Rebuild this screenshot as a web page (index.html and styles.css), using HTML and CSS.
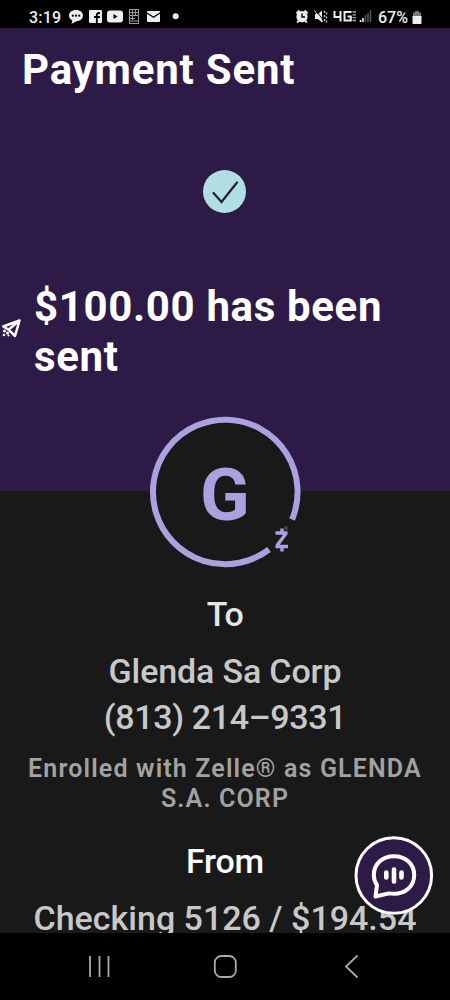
FILE: index.html
```
<!DOCTYPE html>
<html lang="en">
<head>
<meta charset="utf-8" />
<title>Payment Sent</title>
<link rel="stylesheet" href="styles.css">
</head>

<body>
<div id="phone">
	<div class="status">
		<span class="time">3:19</span>
		<svg class="s-left" width="114" height="18" viewBox="0 0 114 18">
			<path d="M8 2c4.200 0 7 2.300 7 5.600s-2.800 5.700-6.500 5.700L3.500 16l.8-3.500C2 11.400 1 9.700 1 7.600 1 4.300 3.800 2 8 2z" fill="#eee"/>
			<g fill="#000"><circle cx="4.800" cy="7.700" r="1.100"/><circle cx="8" cy="7.700" r="1.100"/><circle cx="11.200" cy="7.700" r="1.100"/></g>
			<rect x="21" y="2" width="13" height="13" rx="1" fill="#eee"/>
			<path d="M28.800 15V6.800q0-2 3.200-1.800M26 9h6" fill="none" stroke="#000" stroke-width="1.800"/>
			<rect x="39" y="2.500" width="16" height="12" rx="3" fill="#eee"/>
			<path d="M45.500 6v5l4-2.500z" fill="#000"/>
			<rect x="61.500" y="1.500" width="9" height="14" fill="none" stroke="#999"/>
			<path d="M62 4.500h8M62 7.500h8M62 10.500h5M64.500 2v10M67.500 2v6M62 13h8" stroke="#999"/>
			<rect x="79" y="3" width="13" height="11" rx="1" fill="#eee"/>
			<path d="M79 5l6.500 4.200L92 5" fill="none" stroke="#000" stroke-width="1.300"/>
			<circle cx="107.700" cy="8.300" r="3" fill="#eee"/>
		</svg>
		<svg class="s-right" width="78" height="18" viewBox="0 0 78 18">
			<circle cx="7" cy="8.700" r="5.600" fill="#eee"/>
			<path d="M1.500 5.500l3-3M12.500 5.500l-3-3M3.500 13l-1.300 1.700M10.500 13l1.300 1.700" stroke="#eee" stroke-width="2"/>
			<path d="M7 5.500V9h3" fill="none" stroke="#000" stroke-width="1.400"/>
			<path d="M20 6h3l4-3.500v12L23 11h-3z" fill="#eee"/>
			<path d="M20.500 2l7 9" stroke="#000"/>
			<path d="M19.500 2.500l8.500 11.500" stroke="#ddd"/>
			<path d="M29.500 3v2M31.500 4.500v2M29.500 7v2M31.500 8.500v2M29.500 11v2M31.500 12.500v2" stroke="#ccc" stroke-width="1.400"/>
			<path d="M39.500 3v6h6.500M45.500 3v10.500M56.500 4h-7v8.500h6.300V8.500h-3.200" fill="none" stroke="#eee" stroke-width="2"/>
			<path d="M57.500 4h3.500M57.500 6.800H61M57.500 9.600H61M57.500 12.500H61" stroke="#aaa" stroke-width="1.300"/>
			<path d="M65.500 14v-2M68 14v-4" stroke="#eee" stroke-width="1.600"/>
			<path d="M70.500 14V7M73 14V5M75.500 14V2" stroke="#555" stroke-width="1.600"/>
		</svg>
		<span class="percent">67%</span>
		<svg class="battery" width="10" height="14" viewBox="0 0 10 14">
			<path d="M3 0h4v1.500h2v4H1v-4h2z" fill="#777"/>
			<path d="M.5 5h9v7q0 1-1 1h-7q-1 0-1-1z" fill="#eee"/>
		</svg>
	</div>

	<div class="top">
		<h1>Payment Sent</h1>
		<svg class="check" width="43" height="43" viewBox="0 0 43 43">
			<circle cx="21.500" cy="21.500" r="21.500" fill="#b0dfe2"/>
			<path d="M10.500 23l8 9L34 12.500" fill="none" stroke="#201c3a" stroke-width="2.200" stroke-linecap="round"/>
		</svg>
		<div class="sent">
			<svg class="plane" width="22" height="22" viewBox="0 0 22 22">
				<path d="M19.500 2.500L3.300 8.500l5.200 3.200 6.500 6.300zM19.500 2.500l-11 9.200" fill="none" stroke="#fff" stroke-width="2.500" stroke-linejoin="round"/>
				<g fill="#fff"><circle cx="4.500" cy="13" r="1.500"/><circle cx="7.500" cy="15" r="1.500"/><circle cx="4" cy="17" r="1.300"/><circle cx="8.500" cy="17.500" r="1.100"/></g>
			</svg>
			<h2>$100.00 has been sent</h2>
		</div>
	</div>

	<div class="detail">
		<div class="avatar">
			<svg width="152" height="152" viewBox="0 0 152 152">
				<circle cx="76.500" cy="76" r="74.500" fill="#191919"/>
				<path d="M143.100 103.500A72.300 72.300 0 1 0 120 133.500" fill="none" stroke="#aaa1de" stroke-width="6"/>
				<path d="M126.500 117h12M137 117.500l-9 12M126.500 130.500h12.500M133 112.500v4M133 130v5.500" fill="none" stroke="#aaa1de" stroke-width="3.400"/>
				<circle cx="137" cy="112" r="2" fill="#48464f"/>
			</svg>
			<span>G</span>
		</div>
		<h3 class="to">To</h3>
		<p class="name">Glenda Sa Corp</p>
		<p class="tel">(813) 214–9331</p>
		<p class="zelle">Enrolled with Zelle® as GLENDA<br>S.A. CORP</p>
		<h3 class="from">From</h3>
		<p class="account">Checking 5126 / $194.54</p>
	</div>

	<div class="nav">
		<svg width="450" height="67" viewBox="0 0 450 67" fill="none" stroke="#aaa" stroke-width="1.800">
			<path d="M90 23v21M99.500 23v21M108.500 23v21"/>
			<rect x="214.800" y="23" width="21" height="21" rx="6.500"/>
			<path d="M357.500 22.500L346 33.500l11.500 11"/>
		</svg>
	</div>

	<svg class="chat" width="80" height="80" viewBox="0 0 80 80">
		<circle cx="39.800" cy="40.500" r="37.800" fill="#2d1a47" stroke="#fff" stroke-width="3"/>
		<path d="M23 50c-2.200-3-3.200-6.300-3.200-10C19.800 29 28.200 21.300 40 21.300S60.200 29 60.200 40 51.800 58.800 40 58.800c-2 0-3.500-.1-5.200-.4L21.500 61.500z" fill="none" stroke="#fff" stroke-width="4" stroke-linejoin="round"/>
		<path d="M32.300 37.500v5M40 34.500v12M47.500 37.500v5" stroke="#fff" stroke-width="4.600" stroke-linecap="round"/>
	</svg>
</div>
</body>
</html>
```
FILE: styles.css
```
*{ margin:0; padding:0;}
body{ background:#000; font-family:Roboto, "Liberation Sans", sans-serif;}
svg{ display:block; flex:none;}
#phone{ width:450px; height:1000px; position:relative; overflow:hidden; display:flex; flex-direction:column;}

.status{ height:28px; flex:none; background:#000; color:#eee; display:flex; align-items:center; font-size:16px; font-weight:500; line-height:20px; padding:7px 0 0 29px; box-sizing:border-box;}
.time{ width:39px; letter-spacing:.2px;}
.s-left{ margin-top:-2px;}
.s-right{ margin:-2px 0 0 113px;}
.percent{ width:33px; margin-left:5px;}
.battery{ margin-left:1px;}

.top{ height:463px; flex:none; background:#2d1a47; color:#fff; padding-top:17px; box-sizing:border-box;}
.top h1{ font-size:42px; line-height:50px; font-weight:700; padding-left:22px; white-space:nowrap; letter-spacing:.8px;}
.check{ margin:75px auto 0 203px;}
.sent{ display:flex; align-items:center; margin-top:69px;}
.plane{ margin-top:-6px;}
.sent h2{ font-size:42px; line-height:50px; font-weight:700; width:370px; margin-left:12px; letter-spacing:.65px;}

.detail{ height:442px; flex:none; background:#191919; color:#c8c8c8; text-align:center; white-space:nowrap;}
.detail h3, .detail p{ font-size:34px; font-weight:500; line-height:45px;}
.avatar{ width:152px; height:152px; margin:-75px auto 0; display:grid; position:relative;}
.avatar svg, .avatar span{ grid-area:1 / 1;}
.avatar span{ font-size:73px; line-height:158px; height:152px; font-weight:700; color:#aaa1de;}
.detail .to{ margin-top:24px; color:#e6e6e6; letter-spacing:-.5px;}
.detail .name{ margin-top:12px; letter-spacing:-.15px;}
.detail .tel{ letter-spacing:-.35px; margin-top:1px;}
.detail .zelle{ font-size:25px; line-height:30px; font-weight:600; margin-top:14px; color:#a2a2a2; letter-spacing:1.15px;}
.detail .from{ margin-top:25px; color:#fff; letter-spacing:-.2px;}
.detail .account{ margin-top:12px;}

.nav{ height:67px; flex:none; background:#000; position:relative;}
.chat{ position:absolute; left:354px; top:835px;}
```
